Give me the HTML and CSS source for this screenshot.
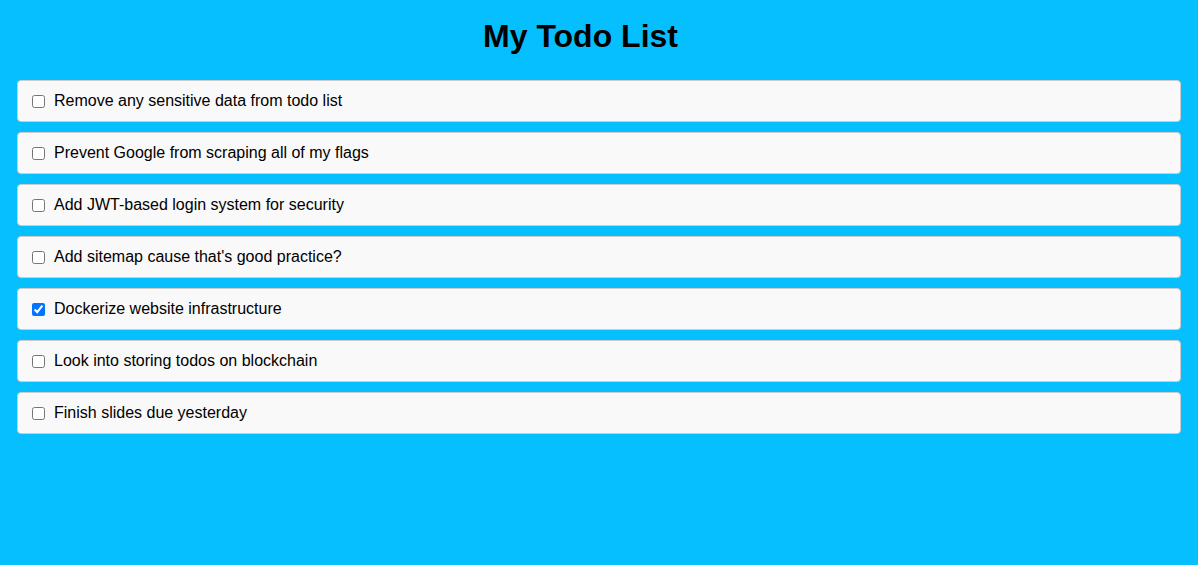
FILE: index.html
```html
<!DOCTYPE html>
<html>
<head>
<meta charset="utf-8">
<title>My Todo List</title>
<link rel="stylesheet" href="styles.css">
</head>
<body>
<main class="page">
  <h1 class="title">My Todo List</h1>
  <ul class="todos">
    <li class="todo"><input type="checkbox" class="check"><span>Remove any sensitive data from todo list</span></li>
    <li class="todo"><input type="checkbox" class="check"><span>Prevent Google from scraping all of my flags</span></li>
    <li class="todo"><input type="checkbox" class="check"><span>Add JWT-based login system for security</span></li>
    <li class="todo"><input type="checkbox" class="check"><span>Add sitemap cause that's good practice?</span></li>
    <li class="todo"><input type="checkbox" class="check" checked><span>Dockerize website infrastructure</span></li>
    <li class="todo"><input type="checkbox" class="check"><span>Look into storing todos on blockchain</span></li>
    <li class="todo"><input type="checkbox" class="check"><span>Finish slides due yesterday</span></li>
  </ul>
</main>
</body>
</html>
```
FILE: styles.css
```css
html, body {
  margin: 0;
  padding: 0;
  background: #06bfff;
  font-family: "Liberation Sans", Arial, sans-serif;
  color: #000;
}
.page {
  padding: 18px 17px 0;
}
.title {
  margin: 0 37px 25px 0;
  font-size: 32px;
  font-weight: bold;
  text-align: center;
  line-height: 37px;
}
.todos {
  list-style: none;
  margin: 0;
  padding: 0;
  display: flex;
  flex-direction: column;
  gap: 10px;
}
.todo {
  display: flex;
  align-items: center;
  gap: 9px;
  padding: 10px 14px;
  background: #f9f9f9;
  border: 1px solid #ccc;
  border-radius: 4px;
  font-size: 16px;
  line-height: 20px;
}
.check {
  margin: 0;
  width: 13px;
  height: 13px;
}
```
